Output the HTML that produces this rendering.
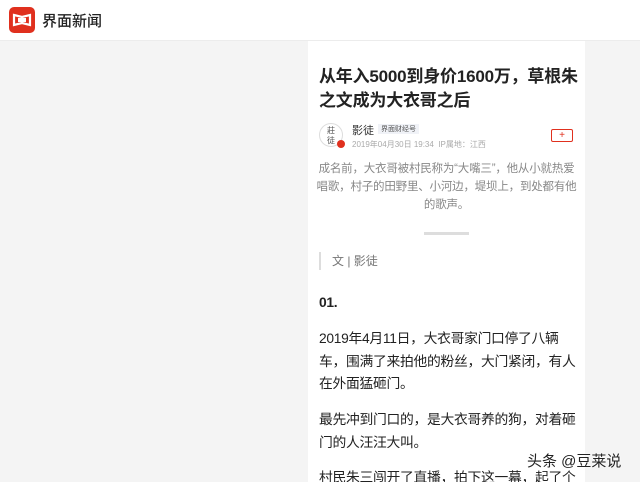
<!DOCTYPE html>
<html style="overflow:hidden"><head><meta charset="utf-8"><style>
html,body{overflow:hidden;height:482px}
body{margin:0;width:640px;background:#f4f4f4;font-family:"Liberation Sans","Noto Sans CJK SC",sans-serif;position:relative}
.hdr{position:absolute;left:0;top:0;width:640px;height:40px;background:#fff;border-bottom:1px solid #ececec}
.logo{position:absolute;left:9px;top:7px;width:26px;height:26px;background:#e0301e;border-radius:5px}
.brand{position:absolute;left:42px;top:10px;font-size:15px;color:#222;font-weight:500}
.col{position:absolute;left:308px;top:41px;width:277px;height:441px;background:#fff;overflow:hidden}
.t{position:absolute;left:11px;top:24px;width:270px;font-size:17px;font-weight:bold;line-height:24px;color:#222;letter-spacing:-0.2px;white-space:nowrap}
.av{position:absolute;left:11px;top:82px;width:24px;height:24px;border:1px solid #ddd;border-radius:50%;font-size:8px;color:#555;text-align:center;line-height:10px;padding-top:2px;box-sizing:border-box}
.dot{position:absolute;left:29px;top:99px;width:8px;height:8px;border-radius:50%;background:#e0301e}
.nm{position:absolute;left:44px;top:81px;font-size:11px;color:#333}
.tag{position:absolute;left:70px;top:83px;font-size:7px;color:#555;background:#f0f2f7;padding:0 3px}
.dt{position:absolute;left:44px;top:98px;font-size:8px;color:#aaa}
.plus{position:absolute;left:243px;top:88px;width:20px;height:11px;border:1px solid #e0301e;border-radius:2px;color:#e0301e;font-size:10px;line-height:11px;text-align:center}
.sum{position:absolute;left:0px;top:119px;width:277px;text-align:center;font-size:11.5px;line-height:18px;color:#888;letter-spacing:-0.2px;white-space:nowrap}
.div{position:absolute;left:116px;top:191px;width:45px;height:3px;background:#ddd}
.by{position:absolute;left:11px;top:211px;height:18px;border-left:2px solid #ddd;padding-left:11px;font-size:12px;color:#777;line-height:18px}
.b{position:absolute;left:11px;width:268px;font-size:13.8px;letter-spacing:-0.3px;line-height:22.5px;color:#222;white-space:nowrap}
.wm{position:absolute;left:527px;top:450px;font-size:15px;color:#222;text-shadow:0 0 2px #fff,0 0 2px #fff}
</style></head><body>
<div class="hdr"><div class="logo"><svg width="26" height="26"><path d="M5 8 L13 10 L21 8 L21 18 L13 16 L5 18 Z" fill="none" stroke="#fff" stroke-width="2.2"/><rect x="9" y="11" width="8" height="4" fill="#fff"/></svg></div><div class="brand">界面新闻</div></div>
<div class="col">
<div class="t">从年入5000到身价1600万，草根朱<br>之文成为大衣哥之后</div>
<div class="av">莊<br>徒</div><div class="dot"></div>
<div class="nm">影徒</div><div class="tag">界面财经号</div>
<div class="dt">2019年04月30日 19:34 &nbsp;IP属地：江西</div>
<div class="plus">+</div>
<div class="sum">成名前，大衣哥被村民称为“大嘴三”，他从小就热爱<br>唱歌，村子的田野里、小河边，堤坝上，到处都有他<br>的歌声。</div>
<div class="div"></div>
<div class="by">文 | 影徒</div>
<div class="b" style="top:251px;font-weight:bold">01.</div>
<div class="b" style="top:287px">2019年4月11日，大衣哥家门口停了八辆<br>车，围满了来拍他的粉丝，大门紧闭，有人<br>在外面猛砸门。</div>
<div class="b" style="top:368px">最先冲到门口的，是大衣哥养的狗，对着砸<br>门的人汪汪大叫。</div>
<div class="b" style="top:426px">村民朱三闯开了直播，拍下这一幕，起了个</div>
</div>
<div class="wm">头条 @豆莱说</div>
</body></html>
